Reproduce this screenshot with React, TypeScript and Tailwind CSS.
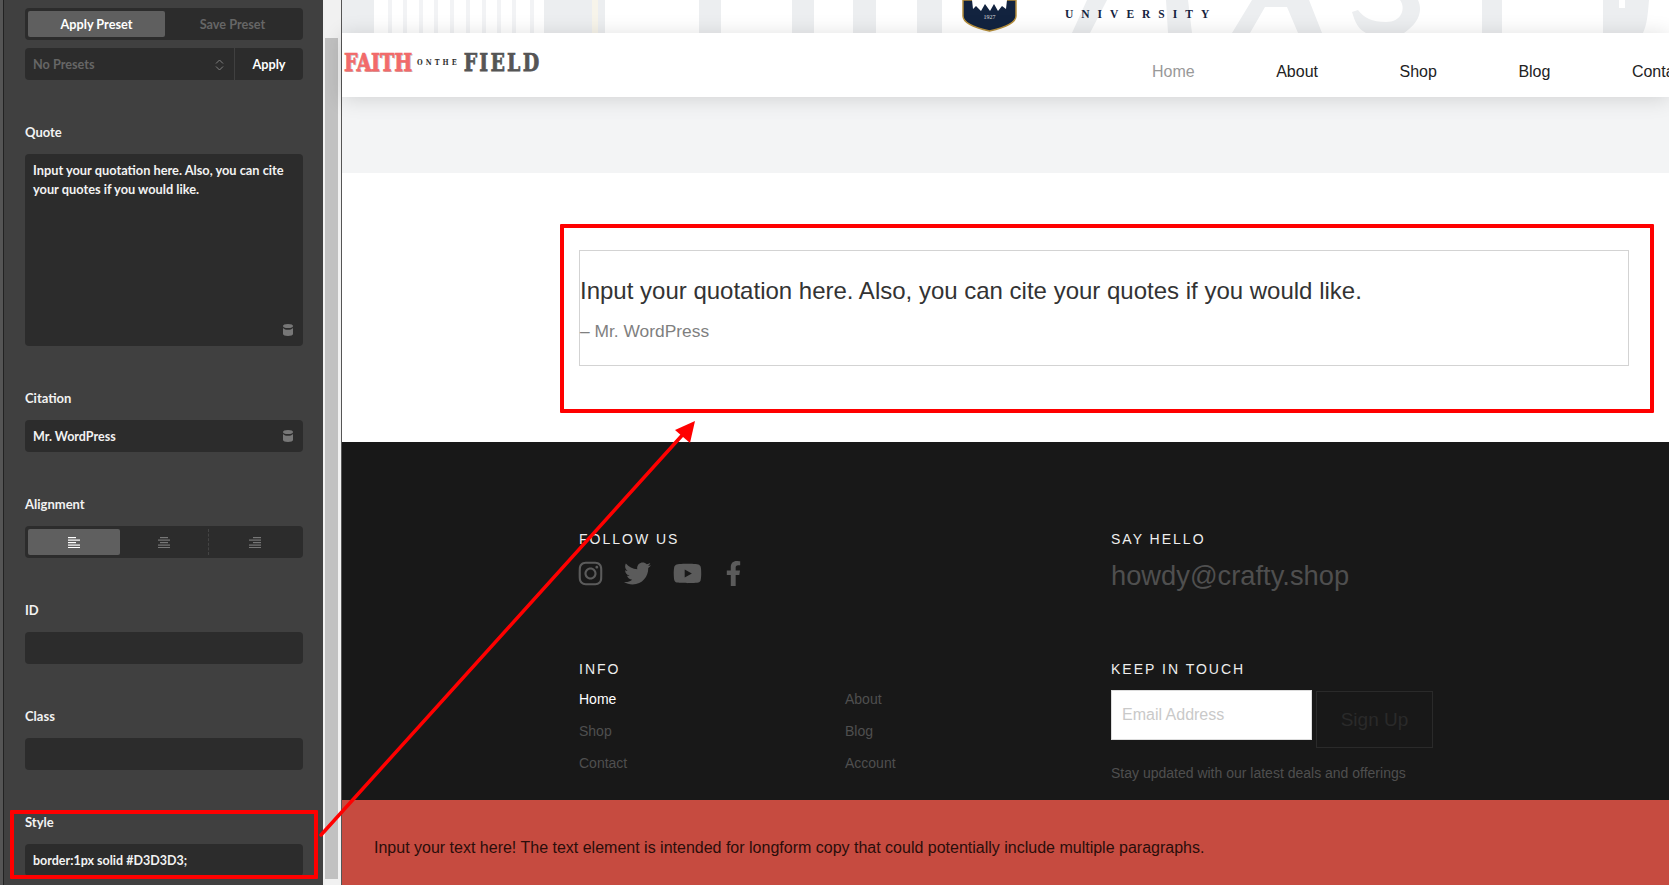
import { FaFacebookF, FaInstagram, FaTwitter, FaYoutube } from "react-icons/fa";

const BANDS = [
  [342, 32],
  [544, 61],
  [699, 22],
  [792, 22],
  [853, 23],
  [917, 25],
  [1482, 20],
];

const STRIPES = [388, 403, 419, 434, 450, 466, 482, 497, 512, 530];

const DbIcon = () => (
  <svg width="10" height="12" viewBox="0 0 10 12" className="shrink-0">
    <ellipse cx="5" cy="2" rx="5" ry="2" fill="#777777" />
    <path d="M0 4c1 1.400 3 1.800 5 1.800S9 5.400 10 4v6c0 1.200-2.200 2-5 2s-5-.8-5-2z" fill="#777777" />
  </svg>
);

const AlignIcon = ({ mode, color }: { mode: "left" | "center" | "right"; color: string }) => {
  const rows = [8, 12, 8, 12, 12];
  return (
    <svg width="12" height="11" viewBox="0 0 12 11">
      {rows.map((w, i) => {
        const x = mode === "left" ? 0 : mode === "right" ? 12 - w : (12 - w) / 2;
        return <rect key={i} x={x} y={i * 2.5} width={w} height="1.2" fill={color} />;
      })}
    </svg>
  );
};

const Field = ({ label, children }: { label: string; children: React.ReactNode }) => (
  <div>
    <div className="h-[14px] mb-[14px] text-[13px] leading-[13px] font-bold text-[#f2f2f2]">{label}</div>
    {children}
  </div>
);

const TextBox = ({ value, icon }: { value?: string; icon?: boolean }) => (
  <div className="h-[32px] rounded-[4px] bg-[#2c2c2c] pl-[8px] pr-[10px] flex items-center justify-between text-[12.500px] font-bold text-[#f2f2f2]">
    <span className="pt-[2px]">{value}</span>
    {icon && <DbIcon />}
  </div>
);

const Sidebar = () => (
  <aside className="w-[319px] h-full shrink-0 bg-[#404040] pl-[21px] pr-[20px] pt-[8px] overflow-hidden font-['Lato',sans-serif]">
    <div className="h-[32px] rounded-[4px] bg-[#2c2c2c] p-[3px] flex text-[12.700px] font-bold">
      <div className="w-[137px] pt-[1px] rounded-[2px] bg-[#5f5f5f] text-white flex items-center justify-center">Apply Preset</div>
      <div className="flex-1 pt-[1px] text-[#666666] flex items-center justify-center">Save Preset</div>
    </div>
    <div className="mt-[8px] h-[32px] rounded-[4px] bg-[#2c2c2c] flex text-[12.700px] font-bold">
      <div className="w-[210px] pl-[8px] pr-[10px] pt-[1px] flex items-center justify-between border-r border-[#404040] text-[#666666]">
        <span>No Presets</span>
        <svg width="9" height="12" viewBox="0 0 9 12" fill="none" stroke="#808080" strokeWidth="1">
          <path d="M1 4.500 4.500 1 8 4.500M1 7.500 4.500 11 8 7.500" />
        </svg>
      </div>
      <div className="flex-1 pt-[1px] text-white flex items-center justify-center">Apply</div>
    </div>

    <div className="mt-[46px] flex flex-col gap-[46px]">
      <Field label="Quote">
        <div className="h-[192px] rounded-[4px] bg-[#2c2c2c] pl-[8px] pr-[10px] pt-[7px] pb-[10px] flex flex-col justify-between text-[12.800px] leading-[19px] font-bold text-[#f2f2f2]">
          <p>Input your quotation here. Also, you can cite your quotes if you would like.</p>
          <div className="self-end">
            <DbIcon />
          </div>
        </div>
      </Field>
      <Field label="Citation">
        <TextBox value="Mr. WordPress" icon />
      </Field>
      <Field label="Alignment">
        <div className="h-[32px] rounded-[4px] bg-[#2c2c2c] p-[3px] flex">
          <div className="w-[92px] rounded-[2px] bg-[#5f5f5f] flex items-center justify-center">
            <AlignIcon mode="left" color="#ffffff" />
          </div>
          <div className="w-[89px] border-r border-dashed border-[#444444] flex items-center justify-center">
            <AlignIcon mode="center" color="#777777" />
          </div>
          <div className="flex-1 flex items-center justify-center">
            <AlignIcon mode="right" color="#777777" />
          </div>
        </div>
      </Field>
      <Field label="ID">
        <TextBox />
      </Field>
      <Field label="Class">
        <TextBox />
      </Field>
      <Field label="Style">
        <TextBox value="border:1px solid #D3D3D3;" />
      </Field>
    </div>
  </aside>
);

const Hero = () => (
  <div className="h-[33px] bg-white relative overflow-hidden">
    <svg width="1327" height="33" viewBox="342 0 1327 33" className="block">
      {BANDS.map(([x, w]) => (
        <rect key={x} x={x} y="0" width={w} height="33" fill="#eceef0" />
      ))}
      {STRIPES.map((x) => (
        <rect key={x} x={x} y="0" width="4" height="33" fill="#f2f3f5" />
      ))}
      <rect x="592" y="0" width="6" height="33" fill="#f7f4ea" />
      <polygon points="1072,33 1090,33 1107,0 1087,0" fill="#eceef0" />
      <polygon points="1168,33 1192,33 1188,0 1166,0" fill="#eceef0" />
      <polygon points="1232,33 1250,33 1265,7 1287,7 1298,33 1322,33 1309,0 1252,0" fill="#eceef0" />
      <path d="M1352 12c3 10 6 17 14 21h38c12-8 20-20 14-33h-18c6 8 2 22-14 22-14 0-22-4-28-12z" fill="#eceef0" />
      <path d="M1603 33h40c4-8 5-20 6-33h-24v8h-6V0h-16z" fill="#eceef0" />
      <path d="M963 0h53v16c0 7-13 12-26.500 15C976 28 963 23 963 16z" fill="#12233f" stroke="#b68f3c" strokeWidth="1.500" />
      <path d="M972 0h35l-1 9-4-3-4 5-4-7-4 7-5-7-4 7-5-5-3 3z" fill="#ffffff" />
      <text x="989.500" y="19" fontSize="6" fill="#dddddd" textAnchor="middle" fontFamily="Liberation Serif, serif">
        1927
      </text>
    </svg>
    <div className="absolute left-[723px] top-[7px] font-['Liberation_Serif',serif] font-bold text-[11.500px] leading-[14px] tracking-[8px] text-[#14233f] whitespace-nowrap">
      UNIVERSITY
    </div>
  </div>
);

const Header = () => (
  <header className="relative z-10 h-[64px] bg-white shadow-[0_2px_20px_rgba(0,0,0,0.14)] flex overflow-hidden font-['Liberation_Sans',sans-serif]">
    <div className="w-[810px] shrink-0 pl-[2px] pt-[16px]">
      <div className="flex items-center scale-y-[1.25] font-['DejaVu_Serif',serif] font-bold text-[19px] leading-[26px] [-webkit-text-stroke:0.6px_currentColor]">
        <span className="text-[#f26a6a] [text-shadow:1px_1px_0_#bbbbbb] tracking-[0px]">FAITH</span>
        <span className="ml-[5px] mr-[4px] text-[6.500px] text-[#333333] tracking-[3px] [-webkit-text-stroke:0px]">ONTHE</span>
        <span className="text-[#555555] tracking-[2.200px]">FIELD</span>
      </div>
    </div>
    <nav className="flex gap-[81.500px] pt-[28px] text-[16px] leading-[22px] whitespace-nowrap text-[#222222]">
      <span className="text-[#999999]">Home</span>
      <span>About</span>
      <span>Shop</span>
      <span>Blog</span>
      <span>Contact</span>
    </nav>
  </header>
);

const FooterTitle = ({ children }: { children: React.ReactNode }) => (
  <h4 className="text-[14px] leading-[20px] tracking-[2px] text-[#eeeeee]">{children}</h4>
);

const Footer = () => (
  <footer className="h-[358px] bg-[#181818] pl-[237px] pt-[87px] font-['Liberation_Sans',sans-serif]">
    <div className="grid grid-cols-[532px_1fr]">
      <div className="h-[130px]">
        <FooterTitle>FOLLOW US</FooterTitle>
        <div className="mt-[10px] flex items-center text-[#5b5b5b]">
          <FaInstagram size={27} className="ml-[-2px]" />
          <FaTwitter size={27} className="ml-[20px]" />
          <FaYoutube size={29} className="ml-[22px]" />
          <FaFacebookF size={25} className="ml-[19px]" />
        </div>
      </div>
      <div>
        <FooterTitle>SAY HELLO</FooterTitle>
        <div className="mt-[11px] text-[27.300px] leading-[32px] text-[#4f4f4f]">howdy@crafty.shop</div>
      </div>
      <div>
        <FooterTitle>INFO</FooterTitle>
        <div className="mt-[10px] grid grid-cols-[266px_1fr] gap-y-[12px] text-[14px] leading-[20px] text-[#4f4f4f]">
          <span className="text-white">Home</span>
          <span>About</span>
          <span>Shop</span>
          <span>Blog</span>
          <span>Contact</span>
          <span>Account</span>
        </div>
      </div>
      <div>
        <FooterTitle>KEEP IN TOUCH</FooterTitle>
        <div className="mt-[11px] flex items-start">
          <div className="w-[201px] h-[50px] bg-white border border-[#dddddd] pl-[10px] flex items-center text-[16px] text-[#c9c9c9]">
            Email Address
          </div>
          <div className="ml-[4px] mt-[1px] w-[117px] h-[57px] pt-[2px] border border-[#2a2a2a] flex items-center justify-center text-[19px] text-[#2a2a2a]">
            Sign Up
          </div>
        </div>
        <p className="mt-[15px] text-[14px] leading-[20px] text-[#4f4f4f]">Stay updated with our latest deals and offerings</p>
      </div>
    </div>
  </footer>
);

const Annotations = () => (
  <>
    <div className="absolute left-[10px] top-[810px] w-[308px] h-[69px] border-[4px] border-[#ff0000] rounded-[1px]" />
    <div className="absolute left-[560px] top-[224px] w-[1094px] h-[189px] border-[4px] border-[#ff0000] rounded-[1px]" />
    <svg width="1669" height="885" viewBox="0 0 1669 885" className="absolute left-0 top-0 pointer-events-none">
      <line x1="321" y1="835" x2="686" y2="431" stroke="#ff0000" strokeWidth="3.500" strokeLinecap="round" />
      <polygon points="695,421 675,430 690,443" fill="#ff0000" />
    </svg>
  </>
);

export default function App() {
  return (
    <div className="relative w-[1669px] h-[885px] overflow-hidden flex bg-white">
      <div className="w-[4px] h-full shrink-0 bg-[#555555] border-r border-[#222222]" />
      <Sidebar />
      <div className="w-[18px] h-full shrink-0 bg-[#f1f1f1] pl-[2px] pr-[3px] pt-[38px] pb-[6px]">
        <div className="h-full bg-[#c1c1c1]" />
      </div>
      <div className="w-px h-full shrink-0 bg-[#555555]" />
      <main className="flex-1 min-w-0 flex flex-col">
        <Hero />
        <Header />
        <div className="h-[76px] bg-[#f3f4f5]" />
        <section className="h-[269px] bg-white pl-[237px] pr-[40px] pt-[77px] font-['Liberation_Sans',sans-serif]">
          <div className="h-[116px] border border-[#d3d3d3] pt-[25px]">
            <p className="text-[24px] leading-[30px] text-[#333333]">
              Input your quotation here. Also, you can cite your quotes if you would like.
            </p>
            <p className="mt-[13px] text-[17.400px] leading-[24px] text-[#7f7f7f]">– Mr. WordPress</p>
          </div>
        </section>
        <Footer />
        <div className="flex-1 bg-[#c64b40] pl-[32px] pt-[38px] font-['Liberation_Sans',sans-serif] text-[16px] leading-[20px] text-[#2a0e0b]">
          Input your text here! The text element is intended for longform copy that could potentially include multiple paragraphs.
        </div>
      </main>
      <Annotations />
    </div>
  );
}
